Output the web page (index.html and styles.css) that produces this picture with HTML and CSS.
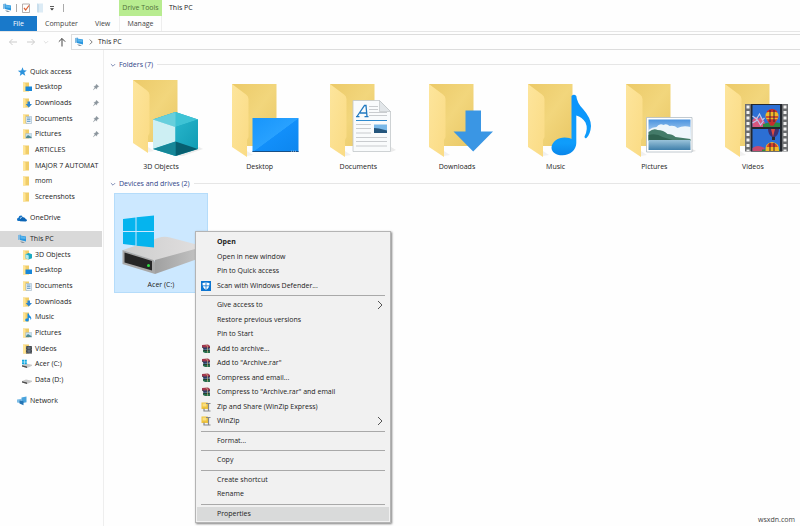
FILE: index.html
```html
<!DOCTYPE html>
<html lang="en">
<head>
    <meta charset="UTF-8">
    <meta name="viewport" content="width=device-width, initial-scale=1.0">
    <title>This PC</title>
    <link rel="stylesheet" href="styles.css">
</head>
<body>
    <!-- shared icons -->
    <svg class="sprite" width="0" height="0" aria-hidden="true">
        <defs>
            <linearGradient id="back" x1="0" y1="0" x2="1" y2="1">
                <stop offset="0" stop-color="#ecca69"/><stop offset="0.5" stop-color="#f2d67c"/><stop offset="1" stop-color="#e9c765"/>
            </linearGradient>
            <linearGradient id="flap" x1="0" y1="0" x2="1" y2="1">
                <stop offset="0" stop-color="#fde59c"/><stop offset="1" stop-color="#fadb84"/>
            </linearGradient>
            <linearGradient id="screen" x1="0" y1="0" x2="1" y2="1">
                <stop offset="0" stop-color="#1795fb"/><stop offset="0.5" stop-color="#28a1ff"/><stop offset="0.51" stop-color="#128ffa"/><stop offset="1" stop-color="#0d86ee"/>
            </linearGradient>
            <linearGradient id="sky" x1="0" y1="0" x2="0" y2="1">
                <stop offset="0" stop-color="#4a93df"/><stop offset="1" stop-color="#d9ecf9"/>
            </linearGradient>
            <linearGradient id="water" x1="0" y1="0" x2="0" y2="1">
                <stop offset="0" stop-color="#9ac3da"/><stop offset="1" stop-color="#3f7faa"/>
            </linearGradient>
            <linearGradient id="cube-side" x1="0" y1="0" x2="1" y2="1">
                <stop offset="0" stop-color="#27b5cb"/><stop offset="1" stop-color="#119cb4"/>
            </linearGradient>
            <linearGradient id="drive-top" x1="0" y1="0" x2="1" y2="0">
                <stop offset="0" stop-color="#cdcdcd"/><stop offset="1" stop-color="#e2e0e0"/>
            </linearGradient>
            <linearGradient id="drive-side" x1="0" y1="0" x2="1" y2="0">
                <stop offset="0" stop-color="#a0a0a0"/><stop offset="1" stop-color="#c9c9c9"/>
            </linearGradient>
            <linearGradient id="note" x1="0" y1="0" x2="0" y2="1">
                <stop offset="0" stop-color="#0a93fb"/><stop offset="0.8" stop-color="#0f9dfb"/><stop offset="1" stop-color="#0a86ea"/>
            </linearGradient>
        </defs>
        <symbol id="folder-large" viewBox="0 0 94 84">
            <path d="M34 80l6-1 -6-4z" fill="#f0f0f0"/>
            <path d="M19 8H63.500V70H19z" fill="url(#back)"/>
            <path d="M19 8L33 18.500Q35.500 20 35.500 23V61L34 64V81L19 71z" fill="url(#flap)"/>
        </symbol>
        <symbol id="folder" viewBox="0 0 10 10">
            <path d="M1 .5h6v9H1z" fill="#f0cd69"/><path d="M1 .5l2.500 1v8.300L1 9z" fill="#ffe596"/>
        </symbol>
        <symbol id="pc" viewBox="0 0 10 10">
            <path d="M1 1l3-.5v5L1 6z" fill="#7fb9e2"/><path d="M3 1.500l6 1v5L3 6z" fill="#2997e0"/><path d="M3.500 2l5 1v2l-5-.5z" fill="#5bb5ec"/><path d="M3 7.300l3 .5 2 1.200H5z" fill="#8795a0"/>
        </symbol>
        <symbol id="desktop" viewBox="0 0 10 10">
            <use href="#folder"/><path d="M3.500 4.500H10V9H3.500z" fill="#1887d9"/>
        </symbol>
        <symbol id="downloads" viewBox="0 0 10 10">
            <use href="#folder"/><path d="M5.500 3.500h2.500V6H10L6.800 9.500 3.700 6h1.800z" fill="#2d86d0"/>
        </symbol>
        <symbol id="documents" viewBox="0 0 10 10">
            <use href="#folder"/><path d="M4 2.500h5.500v7H4z" fill="#eef5fb" stroke="#8aa7bf" stroke-width=".5"/><path d="M5 4h3.500M5 5.700h3.500M5 7.400h3.500" stroke="#4387bb" stroke-width=".8"/>
        </symbol>
        <symbol id="pictures" viewBox="0 0 10 10">
            <use href="#folder"/><path d="M3.700 4.500h6v4.700h-6z" fill="#c7e2f1" stroke="#9bafba" stroke-width=".4"/><path d="M4 8l2-2 1.500 1L9.500 8v1H4z" fill="#4f8a92"/>
        </symbol>
        <symbol id="music" viewBox="0 0 10 10">
            <use href="#folder"/><path d="M5.500 1.500H6.800Q7 3.400 8.600 4.600 10 6.300 8.800 8.200 8.900 6.300 6.800 5.500V8A1.800 1.500 0 1 1 5.500 6.600z" fill="#138be5"/>
        </symbol>
        <symbol id="videos" viewBox="0 0 10 10">
            <use href="#folder"/><path d="M4 2h6v7.500H4z" fill="#33383c"/><path d="M5.400 2.600h3.200v2.800H5.400zM5.400 6h3.200v2.800H5.400z" fill="#66707f"/><path d="M4.600 2v7.500M9.400 2v7.500" stroke="#c9c9c9" stroke-width=".5" stroke-dasharray=".8 .7"/>
        </symbol>
        <symbol id="objects" viewBox="0 0 10 10">
            <use href="#folder"/><path d="M6.700 3L10 4.300v4L6.700 9.600 3.500 8.300v-4z" fill="#1ba9c1"/><path d="M3.500 4.300l3.200 1.200v4.100L3.500 8.300z" fill="#b5e8ee"/>
        </symbol>
        <symbol id="drive" viewBox="0 0 10 10">
            <path d="M0 6l4-1.600 6 1.400v1L5 9 0 7.500z" fill="#c7c7c7"/><path d="M0 6.200l5 1.300V9L0 7.600z" fill="#4c4c4c"/>
        </symbol>
        <symbol id="drive-win" viewBox="0 0 10 10">
            <use href="#drive"/><path d="M0 .8h2v2H0zM2.500.8h2.300v2H2.500zM0 3.200h2v2H0zM2.500 3.200h2.300v2H2.500z" fill="#10a8e0"/>
        </symbol>
        <symbol id="pin" viewBox="0 0 10 10">
            <path d="M5.500 1.500l3 3-1 .2L6 6.200l-.2 1.500-1.500-1.500L1.700 8.500l2-2.800L2.300 4.300l1.500-.2 1.500-1.500z" fill="#8b959d" stroke="#8b959d" stroke-width=".5"/>
        </symbol>
        <symbol id="rar" viewBox="0 0 10 10">
            <path d="M1 1l6-.5L9 2v2L3 4.500 1 3z" fill="#a3374e"/><path d="M1.500 3.500h6.500l1 2-6 .5z" fill="#3f5797"/><path d="M2 6l6-.5 1 1V9H4L2 8z" fill="#28704e"/><path d="M1 3l2 1.300 6-.5M2 5.700l2 1L9 6.200" stroke="#222" stroke-width=".7" fill="none"/><path d="M4.500.8l2 1v7" stroke="#d5bd87" stroke-width=".6" fill="none"/>
        </symbol>
        <symbol id="zip" viewBox="0 0 10 10">
            <path d="M.5.5h6l1 1V7H.5z" fill="#efc33b"/><path d="M1.500 1.500h4v3h-4z" fill="#f9df83"/><path d="M5 1.500h4.500M5.500 9h4M7.500 1.500V9M3 6.500V9h2.500" stroke="#85888b" stroke-width="1.200" fill="none"/>
        </symbol>
        <symbol id="chevron" viewBox="0 0 10 10">
            <path d="M3 1l4 4-4 4" fill="none" stroke="currentColor"/>
        </symbol>
        <symbol id="chevron-down" viewBox="0 0 10 10">
            <path d="M1.500 3.500L5 7l3.500-3.500" fill="none" stroke="currentColor"/>
        </symbol>
    </svg>

    <div class="window">
        <header class="ribbon">
            <div class="ribbon-main">
                <div class="quick-bar">
                    <svg class="icon"><use href="#pc"/></svg>
                    <span class="bar"></span>
                    <button type="button" aria-label="Properties">
                        <svg class="icon" viewBox="0 0 10 10"><path d="M1.500 1h7v8.500h-7z" fill="#fff" stroke="#a39b98" stroke-width=".8"/><path d="M3 5l1.700 2L8 2.500" fill="none" stroke="#dd6336" stroke-width="1.200"/></svg>
                    </button>
                    <button type="button" aria-label="New folder">
                        <svg class="icon" viewBox="0 0 10 10"><path d="M2 .5h6v9H2z" fill="#dcebf5"/><path d="M2 .5l2 1v8l-2-.5z" fill="#c8deed"/></svg>
                    </button>
                    <button type="button" aria-label="Customize">
                        <svg class="icon" viewBox="0 0 10 10"><path d="M1 3.500h4" stroke="#333" stroke-width=".8"/><path d="M1 5.200h4L3 7.400z" fill="#333"/></svg>
                    </button>
                    <span class="bar"></span>
                </div>
                <div class="tabs">
                    <button type="button" class="tab tab-file">File</button>
                    <button type="button" class="tab tab-computer">Computer</button>
                    <button type="button" class="tab">View</button>
                </div>
            </div>
            <div class="ribbon-tools">
                <span class="tools-title">Drive Tools</span>
                <button type="button" class="tab">Manage</button>
            </div>
            <h1>This PC</h1>
        </header>

        <div class="address-row">
            <div class="history">
                <button type="button" aria-label="Back" disabled><svg class="icon" viewBox="0 0 10 10"><path d="M9 5H1.500M4.500 2L1.500 5l3 3" fill="none" stroke="currentColor"/></svg></button>
                <button type="button" aria-label="Forward" disabled><svg class="icon" viewBox="0 0 10 10"><path d="M1 5h7.500M5.500 2l3 3-3 3" fill="none" stroke="currentColor"/></svg></button>
                <button type="button" aria-label="Recent locations" disabled><svg class="icon small"><use href="#chevron-down"/></svg></button>
                <button type="button" aria-label="Up"><svg class="icon" viewBox="0 0 10 10"><path d="M5 9.500V1.500M1.800 4.700L5 1.500l3.200 3.200" fill="none" stroke="currentColor"/></svg></button>
            </div>
            <div class="address">
                <svg class="icon"><use href="#pc"/></svg>
                <svg class="icon small"><use href="#chevron"/></svg>
                <a href="#">This PC</a>
            </div>
        </div>

        <div class="content">
            <nav class="sidebar">
                <ul class="group-quick">
                    <li><a href="#"><svg class="icon" viewBox="0 0 10 10"><path d="M5.600.3l1 3 3.200.1-2.500 2 1 3.400-2.900-1.900L2.800 9l.7-3.300L.8 3.800l3.400-.4z" fill="#2b92dc"/></svg>Quick access</a></li>
                    <li class="sub"><a href="#"><svg class="icon"><use href="#desktop"/></svg>Desktop<svg class="pin"><use href="#pin"/></svg></a></li>
                    <li class="sub"><a href="#"><svg class="icon"><use href="#downloads"/></svg>Downloads<svg class="pin"><use href="#pin"/></svg></a></li>
                    <li class="sub"><a href="#"><svg class="icon"><use href="#documents"/></svg>Documents<svg class="pin"><use href="#pin"/></svg></a></li>
                    <li class="sub"><a href="#"><svg class="icon"><use href="#pictures"/></svg>Pictures<svg class="pin"><use href="#pin"/></svg></a></li>
                    <li class="sub"><a href="#"><svg class="icon"><use href="#folder"/></svg>ARTICLES</a></li>
                    <li class="sub"><a href="#"><svg class="icon"><use href="#folder"/></svg>MAJOR 7 AUTOMAT</a></li>
                    <li class="sub"><a href="#"><svg class="icon"><use href="#folder"/></svg>mom</a></li>
                    <li class="sub"><a href="#"><svg class="icon"><use href="#folder"/></svg>Screenshots</a></li>
                </ul>
                <ul>
                    <li><a href="#"><svg class="icon" viewBox="0 0 10 10"><path d="M0 6.500Q0 5 1.500 4.800 1.800 2.500 4 2.500 5 2.500 5.700 3.200L3 5v3H1.500Q0 8 0 6.500z" fill="#1573c5"/><path d="M3 8.200Q2 6 4 5.300 5 3.500 7 4.400 8.500 4.600 8.500 6 10 6.200 10 7.300T8.700 8.400z" fill="#0b64b5"/></svg>OneDrive</a></li>
                </ul>
                <ul class="group-pc">
                    <li class="current"><a href="#"><svg class="icon"><use href="#pc"/></svg>This PC</a></li>
                    <li class="sub"><a href="#"><svg class="icon"><use href="#objects"/></svg>3D Objects</a></li>
                    <li class="sub"><a href="#"><svg class="icon"><use href="#desktop"/></svg>Desktop</a></li>
                    <li class="sub"><a href="#"><svg class="icon"><use href="#documents"/></svg>Documents</a></li>
                    <li class="sub"><a href="#"><svg class="icon"><use href="#downloads"/></svg>Downloads</a></li>
                    <li class="sub"><a href="#"><svg class="icon"><use href="#music"/></svg>Music</a></li>
                    <li class="sub"><a href="#"><svg class="icon"><use href="#pictures"/></svg>Pictures</a></li>
                    <li class="sub"><a href="#"><svg class="icon"><use href="#videos"/></svg>Videos</a></li>
                    <li class="sub"><a href="#"><svg class="icon"><use href="#drive-win"/></svg>Acer (C:)</a></li>
                    <li class="sub"><a href="#"><svg class="icon"><use href="#drive"/></svg>Data (D:)</a></li>
                </ul>
                <ul>
                    <li><a href="#"><svg class="icon" viewBox="0 0 10 10"><path d="M4.500 1.500L9.500.5v5.700l-5 1z" fill="#4aa3dc"/><path d="M0 3.500l5-.8v4.500L0 6.500z" fill="#7ebde6"/><path d="M2.500 4.500l4 .8v4L2.500 7.500z" fill="#2474b4"/></svg>Network</a></li>
                </ul>
            </nav>

            <main>
                <h2><button type="button"><svg class="icon small"><use href="#chevron-down"/></svg>Folders (7)</button></h2>
                <div class="tiles folders">
                    <a href="#" class="tile">
                        <svg viewBox="0 0 94 84">
                            <use href="#folder-large" width="94" height="84" y="-4"/>
                            <path d="M61 80l24-9 4 2-20 7z" fill="#ececec"/>
                            <path d="M61.500 36L84 43.500V73L61.500 80 39 73V43.500z" fill="#1aa9c0"/>
                            <path d="M61.500 36L84 43.500 61.500 51 39 43.500z" fill="#3ec3d5"/>
                            <path d="M61.500 36V51L39 43.500z" fill="#67cfdc"/>
                            <path d="M39 43.500L61.500 51V65.500L39 73z" fill="#cdeff3"/>
                            <path d="M61.500 51L84 43.500V73L61.500 65.500z" fill="url(#cube-side)"/>
                            <path d="M61.500 65.500V80L39 73z" fill="#168798"/>
                            <path d="M61.500 65.500L84 73 61.500 80z" fill="#075f70"/>
                        </svg>
                        <span>3D Objects</span>
                    </a>
                    <a href="#" class="tile">
                        <svg viewBox="0 0 94 84">
                            <use href="#folder-large" width="94" height="84"/>
                            <path d="M39.500 42H85.500V76H39.500z" fill="url(#screen)"/>
                            <path d="M39.500 75H85.500V76H39.500z" fill="#174f86"/>
                            <path d="M78 75.200h1m1 0h1m1 0h1" stroke="#c9dcec" stroke-width=".8"/>
                        </svg>
                        <span>Desktop</span>
                    </a>
                    <a href="#" class="tile">
                        <svg viewBox="0 0 94 84">
                            <use href="#folder-large" width="94" height="84"/>
                            <path d="M80 71l5 3-5 2z" fill="#ececec"/>
                            <path d="M42 24.500H68.500L79.500 35.500V75.500H42z" fill="#f9fbfc" stroke="#c2c6c9" stroke-width=".8"/>
                            <path d="M68.500 24.500V35.500H79.500z" fill="#e2e6e9" stroke="#b9bdc0" stroke-width=".6"/>
                            <path d="M46 40.500L53.500 29.500H55L56 40.500M49 37H55.500M45 40.700H48.500M53.500 40.700H57.500" fill="none" stroke="#2079c0" stroke-width="1.300"/>
                            <path d="M58 30.500h9M58 33.500h9M58 36.500h18M58 39.500h18M45 48.500h15M45 52.500h15M45 57h15M45 61.500h31M45 65.500h31M45 70h31" stroke="#bcc0c3" stroke-width=".8"/>
                            <path d="M45 44.500h31" stroke="#2f8bcf"/>
                            <path d="M63 48.500H76V57H63z" fill="#79b8e8"/>
                            <path d="M63 52l5 .5 8 2V57H63z" fill="#24557c"/>
                        </svg>
                        <span>Documents</span>
                    </a>
                    <a href="#" class="tile">
                        <svg viewBox="0 0 94 84">
                            <use href="#folder-large" width="94" height="84"/>
                            <path d="M55.500 34.500H71V55.500H83L63.200 75.500 43.500 55.500H55.500z" fill="#3a96e4"/>
                        </svg>
                        <span>Downloads</span>
                    </a>
                    <a href="#" class="tile">
                        <svg viewBox="0 0 94 84">
                            <use href="#folder-large" width="94" height="84"/>
                            <path d="M62.500 20Q65 17.500 67.300 20 68 27 74 33 82 42 82 50 81.500 58 77.500 62 75.500 63 75.500 60.500 79.500 53 76.500 46.500 73 41 67.300 39.500V67C67.300 74 61 79.300 53.500 79.300 46.500 79.300 42.500 76 42.500 71.500 43 65.500 49 61.500 55.500 61.500 59.500 61.500 61.500 62.300 62.500 63z" fill="url(#note)"/>
                        </svg>
                        <span>Music</span>
                    </a>
                    <a href="#" class="tile">
                        <svg viewBox="0 0 94 84">
                            <use href="#folder-large" width="94" height="84"/>
                            <path d="M85 73l4 2-4 1z" fill="#e4e4e4"/>
                            <path d="M39.500 41.500H85V76H39.500z" fill="#fff" stroke="#b3bdc4" stroke-width=".8"/>
                            <path d="M41.500 43.500H83.500V63H41.500z" fill="url(#sky)"/>
                            <path d="M41.500 54q4-3 8-3 3-4 7-2 3-2 6 1 5-1 8 2 6-3 13-1v12h-42z" fill="#eef6fb"/>
                            <path d="M41.500 56q5-4 9-2 6 0 10 4 5 0 8 3l15 2v2h-42z" fill="#447b69"/>
                            <path d="M41.500 59q8-2 14 2l10 3h-24z" fill="#2f6250"/>
                            <path d="M41.500 64H83.500V74H41.500z" fill="url(#water)"/>
                        </svg>
                        <span>Pictures</span>
                    </a>
                    <a href="#" class="tile">
                        <svg viewBox="0 0 94 84">
                            <use href="#folder-large" width="94" height="84"/>
                            <path d="M39 28H82V75.500H39z" fill="#6c6e70"/>
                            <path d="M45 28H76V75.500H45z" fill="#24282e"/>
                            <path d="M42 29.500V75M79 29.500V75" stroke="#f2f2f2" stroke-width="3" stroke-dasharray="3 2.500"/>
                            <path d="M46.500 29H74V51H46.500zM46.500 53H74V75H46.500z" fill="#2c6fd4"/>
                            <path d="M46.500 44q4-6 6-1 3-5 6 3l2 5h-14z" fill="#d7577f"/>
                            <path d="M46.500 40l4 3 3-5 3 6 2-2M46.500 47l5-3 3 5 3-4" fill="none" stroke="#b9c9ef" stroke-width="1.200"/>
                            <path d="M57 48q8-3 17-1v4H57z" fill="#2e8a43"/>
                            <path d="M46.500 72q5-4 12 0v3h-12z" fill="#c84a6f"/>
                            <path d="M56 73.500h18V75H56z" fill="#2e8a43"/>
                            <circle cx="66" cy="40" r="6.500" fill="#f2ba27"/>
                            <path d="M61 36q5-5 10 0M60 41h12M62 44l3 5h2l3-5z" fill="#c72f2f" stroke="#c72f2f" stroke-width="1.500"/>
                            <path d="M64 34v12M68 34v12" stroke="#32293a"/>
                            <path d="M62 53h11q0 5-4 8h-3q-4-3-4-8z" fill="#41306f"/><path d="M65 53l2 8 2-8z" fill="#dd4a41"/><path d="M66 61h3v3h-3z" fill="#302a2a"/>
                            <path d="M59.500 75q-1-8 6.500-9 8 1 7 9z" fill="#f2ba27"/>
                            <path d="M62 68q4-2 8 0l2 3H60.500z" fill="#d9432b"/><path d="M64 67v8M68 67v8" stroke="#32293a"/>
                        </svg>
                        <span>Videos</span>
                    </a>
                </div>

                <h2><button type="button"><svg class="icon small"><use href="#chevron-down"/></svg>Devices and drives (2)</button></h2>
                <div class="tiles">
                    <a href="#" class="tile selected">
                        <svg viewBox="0 0 94 84">
                            <path d="M9 56L44 44Q50 42 56 43.500L92 53 41 67z" fill="url(#drive-top)"/>
                            <path d="M41 66L92 52V62L41 80z" fill="url(#drive-side)"/>
                            <path d="M8.500 56L38 65.500Q41 66 41 69V80L8.500 70z" fill="#a8a8a8"/>
                            <path d="M10.500 58.500L38 67V76.500L10.500 68.500z" fill="#262626"/>
                            <circle cx="34.500" cy="71.500" r="1.500" fill="#31de42"/>
                            <path d="M9 25L21.500 23.500V37H9zM22.500 23.300L40 21.500V37H22.500zM9 38H21.500V51.500L9 50zM22.500 38H40V53.500L22.500 51.700z" fill="#05b4ee"/>
                        </svg>
                        <span>Acer (C:)</span>
                    </a>
                </div>
                <p class="site">wsxdn.com</p>
            </main>
        </div>

        <div class="menu" role="menu">
            <button type="button" role="menuitem" class="default">Open</button>
            <button type="button" role="menuitem">Open in new window</button>
            <button type="button" role="menuitem">Pin to Quick access</button>
            <button type="button" role="menuitem"><svg class="icon" viewBox="0 0 10 10"><path d="M0 0h10v10H0z" fill="#0b74d1"/><path d="M5 1.200Q6.500 2 8.500 2q.2 5-3.500 7Q1.300 7 1.500 2 3.500 2 5 1.200z" fill="#fff"/><path d="M5 1v8M1.500 4.800h7" stroke="#0b74d1" stroke-width=".8"/></svg>Scan with Windows Defender...</button>
            <hr>
            <button type="button" role="menuitem">Give access to<svg class="arrow"><use href="#chevron"/></svg></button>
            <button type="button" role="menuitem">Restore previous versions</button>
            <button type="button" role="menuitem">Pin to Start</button>
            <button type="button" role="menuitem"><svg class="icon"><use href="#rar"/></svg>Add to archive...</button>
            <button type="button" role="menuitem"><svg class="icon"><use href="#rar"/></svg>Add to "Archive.rar"</button>
            <button type="button" role="menuitem"><svg class="icon"><use href="#rar"/></svg>Compress and email...</button>
            <button type="button" role="menuitem"><svg class="icon"><use href="#rar"/></svg>Compress to "Archive.rar" and email</button>
            <button type="button" role="menuitem"><svg class="icon"><use href="#zip"/></svg>Zip and Share (WinZip Express)</button>
            <button type="button" role="menuitem"><svg class="icon"><use href="#zip"/></svg>WinZip<svg class="arrow"><use href="#chevron"/></svg></button>
            <hr>
            <button type="button" role="menuitem">Format...</button>
            <hr>
            <button type="button" role="menuitem">Copy</button>
            <hr>
            <button type="button" role="menuitem">Create shortcut</button>
            <button type="button" role="menuitem">Rename</button>
            <hr>
            <button type="button" role="menuitem" class="active">Properties</button>
        </div>
    </div>
</body>
</html>
```

FILE: styles.css
```css
* {
    box-sizing: border-box;
}
body {
    margin: 0;
    font-family: "Open Sans", "Noto Sans", sans-serif;
    font-size: 7px;
    line-height: 14px;
    color: #222;
    background: #fefefe;
}
h1, h2, ul, p {
    margin: 0;
    padding: 0;
    font-size: 7px;
    font-weight: normal;
}
ul {
    list-style: none;
}
a {
    color: inherit;
    text-decoration: none;
}
button {
    padding: 0;
    border: none;
    background: none;
    font: inherit;
    color: inherit;
}
.sprite {
    position: absolute;
}
.icon {
    width: 10px;
    height: 10px;
    flex: none;
    display: block;
}
.icon.small {
    width: 6px;
    height: 6px;
}
.window {
    position: relative;
    display: flex;
    flex-direction: column;
    min-height: 100vh;
}

/* title bar and tabs */
.ribbon {
    display: flex;
    border-bottom: 1px solid #e6e6e6;
}
.ribbon-main {
    width: 119px;
}
.quick-bar {
    display: flex;
    align-items: center;
    gap: 4px;
    height: 16px;
    padding-left: 2px;
}
.bar {
    width: 1px;
    height: 8px;
    background: #aaa;
}
.tabs {
    display: flex;
}
.tab {
    height: 15px;
    color: #444;
}
.tab-file {
    width: 37px;
    color: #fff;
    background: #1979ca;
}
.tab-computer {
    margin: 0 17px 0 8px;
}
.ribbon-tools {
    display: flex;
    flex-direction: column;
    width: 43px;
    text-align: center;
}
.ribbon-tools .tab {
    border: 1px solid #eee;
    border-width: 0 1px;
}
.tools-title {
    height: 16px;
    line-height: 16px;
    color: #52713a;
    background: #b8ec90;
}
.ribbon h1 {
    padding-left: 7px;
    line-height: 16px;
}

/* address bar */
.address-row {
    display: flex;
    margin-top: 2px;
}
.history {
    display: flex;
    align-items: center;
    justify-content: space-between;
    width: 71px;
    padding: 0 4px 0 8px;
    color: #444;
}
.history button:disabled {
    color: #ccc;
}
.address {
    display: flex;
    flex: 1;
    align-items: center;
    gap: 4px;
    height: 16px;
    padding-left: 2px;
    border: 1px solid #ddd;
    border-right: none;
}

/* navigation pane */
.content {
    display: flex;
    flex: 1;
}
.sidebar {
    display: flex;
    flex-direction: column;
    gap: 5px;
    width: 104px;
    padding-top: 14px;
    border-right: 1px solid #eee;
}
.sidebar ul {
    display: grid;
    grid-template-columns: minmax(0, 1fr);
    grid-auto-rows: 1fr;
    height: 16px;
}
.sidebar .group-quick {
    height: 141px;
}
.sidebar .group-pc {
    height: 157px;
}
.sidebar a {
    display: flex;
    align-items: center;
    gap: 3px;
    height: 100%;
    padding-left: 17px;
    white-space: nowrap;
}
.sidebar .sub a {
    padding-left: 22px;
}
.sidebar .current {
    margin-right: 1px;
    background: #d9d9d9;
}
.pin {
    width: 8px;
    height: 8px;
    margin-left: auto;
    margin-right: 3px;
}

/* folders and drives */
main {
    display: flex;
    flex: 1;
    flex-direction: column;
    min-width: 0;
    padding: 6px 0 0 6px;
}
h2 {
    display: flex;
    align-items: center;
    gap: 4px;
    color: #2f4488;
}
h2::after {
    content: "";
    flex: 1;
    height: 1px;
    background: #e6e6e6;
}
h2 button {
    display: flex;
    align-items: center;
    gap: 3px;
    height: 17px;
}
.tiles {
    display: grid;
    grid-template-columns: repeat(7, 94px);
    justify-content: space-between;
    margin: 1px 0 0 4px;
}
.folders {
    margin-top: 3px;
}
.tile {
    padding-bottom: 1px;
    text-align: center;
}
.tile svg {
    display: block;
    width: 100%;
}
.tile span {
    display: block;
}
.tile.selected {
    padding-top: 1px;
    background: #cce8ff;
    outline: 1px solid #b5dcfa;
    outline-offset: -1px;
}
.site {
    margin: auto 5px 0 0;
    line-height: 12px;
    text-align: right;
    color: #444;
}

/* context menu */
.menu {
    position: absolute;
    left: 195px;
    top: 231px;
    display: flex;
    flex-direction: column;
    width: 196px;
    height: 292px;
    padding: 3px 1px 1px;
    border: 1px solid #b4b4b4;
    background: #f1f1f1;
    box-shadow: 1px 1px 2px rgba(0, 0, 0, 0.5);
}
.menu button {
    display: flex;
    flex: 1;
    align-items: center;
    padding-left: 20px;
    text-align: left;
}
.menu hr {
    width: 184px;
    height: 1px;
    margin: 2px auto;
    border: none;
    background: #a9a9a9;
}
.menu .icon {
    margin: 0 6px 0 -16px;
}
.menu .arrow {
    width: 10px;
    height: 10px;
    margin-left: auto;
    margin-right: 4px;
    color: #555;
}
.menu .default {
    font-weight: bold;
}
.menu .active {
    background: #d9dada;
}
```
